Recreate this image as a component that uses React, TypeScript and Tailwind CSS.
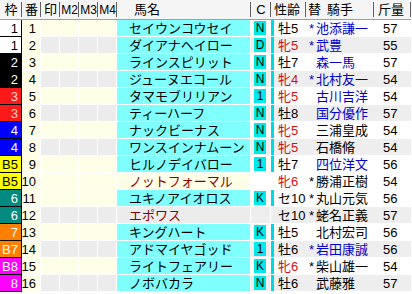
const cols = "grid grid-cols-[22px_19px_19px_19px_19px_19px_134px_20px_35px_68px_37px]";

type Row = {
  waku: string;
  wc: string;
  ban: number;
  name: string;
  c: string;
  sex: string;
  star: boolean;
  jockey: string;
  blue: boolean;
  kin: string;
  out?: boolean;
  shade?: boolean;
};

const wakuColor: Record<string, string> = {
  "1": "bg-white text-black",
  "2": "bg-black text-white",
  "3": "bg-[#ff1a1a] text-[#ffd0d0]",
  "4": "bg-[#0000ff] text-white",
  "5": "bg-[#ffff00] text-black",
  "6": "bg-[#008a80] text-white",
  "7": "bg-[#ff8000] text-white",
  "8": "bg-[#ff00ff] text-white",
};

const rows: Row[] = [
  { waku: "1", wc: "1", ban: 1, name: "セイウンコウセイ", c: "N", sex: "牡5", star: true, jockey: "池添謙一", blue: true, kin: "57" },
  { waku: "1", wc: "1", ban: 2, name: "ダイアナヘイロー", c: "D", sex: "牝5", star: true, jockey: "武豊", blue: true, kin: "55", shade: true },
  { waku: "2", wc: "2", ban: 3, name: "ラインスピリット", c: "N", sex: "牡7", star: false, jockey: "森一馬", blue: true, kin: "57" },
  { waku: "2", wc: "2", ban: 4, name: "ジューヌエコール", c: "N", sex: "牝4", star: true, jockey: "北村友一", blue: true, kin: "54", shade: true },
  { waku: "3", wc: "3", ban: 5, name: "タマモブリリアン", c: "1", sex: "牝5", star: false, jockey: "古川吉洋", blue: true, kin: "54" },
  { waku: "3", wc: "3", ban: 6, name: "ティーハーフ", c: "N", sex: "牡8", star: false, jockey: "国分優作", blue: true, kin: "57", shade: true },
  { waku: "4", wc: "4", ban: 7, name: "ナックビーナス", c: "N", sex: "牝5", star: false, jockey: "三浦皇成", blue: false, kin: "54" },
  { waku: "4", wc: "4", ban: 8, name: "ワンスインナムーン", c: "N", sex: "牝5", star: false, jockey: "石橋脩", blue: false, kin: "54", shade: true },
  { waku: "B5", wc: "5", ban: 9, name: "ヒルノデイバロー", c: "1", sex: "牡7", star: false, jockey: "四位洋文", blue: true, kin: "56" },
  { waku: "B5", wc: "5", ban: 10, name: "ノットフォーマル", c: "", sex: "牝6", star: true, jockey: "勝浦正樹", blue: false, kin: "54", out: true },
  { waku: "6", wc: "6", ban: 11, name: "ユキノアイオロス", c: "K", sex: "セ10", star: true, jockey: "丸山元気", blue: false, kin: "56" },
  { waku: "6", wc: "6", ban: 12, name: "エポワス", c: "", sex: "セ10", star: true, jockey: "蛯名正義", blue: false, kin: "57", out: true, shade: true },
  { waku: "7", wc: "7", ban: 13, name: "キングハート", c: "K", sex: "牡5", star: false, jockey: "北村宏司", blue: false, kin: "56" },
  { waku: "B7", wc: "7", ban: 14, name: "アドマイヤゴッド", c: "1", sex: "牡6", star: true, jockey: "岩田康誠", blue: true, kin: "56", shade: true },
  { waku: "B8", wc: "8", ban: 15, name: "ライトフェアリー", c: "K", sex: "牝6", star: true, jockey: "柴山雄一", blue: false, kin: "54" },
  { waku: "8", wc: "8", ban: 16, name: "ノボバカラ", c: "N", sex: "牡6", star: false, jockey: "武藤雅", blue: false, kin: "57", shade: true },
];

function Head({ children, className = "" }: { children?: React.ReactNode; className?: string }) {
  return (
    <div className={"relative flex items-center h-[20px] border-b border-[#a0a0a0] " + className}>
      {children}
      <span className="absolute right-0 top-[2px] bottom-[2px] w-px bg-[#606060]" />
    </div>
  );
}

function DataRow({ r }: { r: Row }) {
  const light = r.shade ? "bg-[#ececec]" : "bg-[#ffffe8]";
  const side = r.shade ? "bg-[#eeeeee]" : "bg-white";
  return (
    <div className={cols + " h-[17px]"}>
      <div className={"flex items-center justify-end pr-[3px] border-r border-b border-black " + wakuColor[r.wc]}>
        {r.waku}
      </div>
      <div className="flex items-center justify-end pr-[4px] bg-[#ffffe8] border-r border-b border-white">{r.ban}</div>
      <div className={light + " border-r border-b border-white"} />
      <div className={light + " border-r border-b border-white"} />
      <div className={light + " border-r border-b border-white"} />
      <div className={light + " border-r border-b border-white"} />
      <div
        className={
          "flex items-center pl-[12px] border-r border-b border-white whitespace-nowrap " +
          (r.out ? light + " text-[#8b0000]" : "bg-[#80ffff] text-black")
        }
      >
        {r.name}
      </div>
      <div className={"flex items-center pl-[3px] border-r border-b border-white " + side}>
        {r.c && (
          <span className="flex items-center justify-center w-[12px] h-[14px] bg-[#00e8e8] text-black text-[12px]">
            {r.c}
          </span>
        )}
      </div>
      <div className={"flex items-center border-b border-white " + side}>
        <span className={"w-[3px] h-full " + (r.out ? "" : "bg-[#00d8e8]")} />
        <span className={"pl-[4px] " + (r.sex.startsWith("牝") ? "text-[#d01010]" : "text-black")}>{r.sex}</span>
      </div>
      <div className={"flex items-center border-b border-white whitespace-nowrap " + side + (r.blue ? " text-[#0000c8]" : " text-black")}>
        <span className="w-[10px] pl-[3px]">{r.star ? "*" : ""}</span>
        {r.jockey}
      </div>
      <div className={"flex items-center pl-[9px] border-b border-white " + side}>{r.kin}</div>
    </div>
  );
}

export default function App() {
  return (
    <div
      className="w-[412px] h-[294px] overflow-hidden bg-white text-[13px] leading-none text-black"
      style={{ fontFamily: '"Liberation Sans", "Noto Sans CJK JP", sans-serif' }}
    >
      <div className={cols + " bg-[#f5f5f5]"}>
        <Head className="justify-center">枠</Head>
        <Head className="justify-center">番</Head>
        <Head className="justify-center">印</Head>
        <Head className="justify-center text-[12px]">M2</Head>
        <Head className="justify-center text-[12px]">M3</Head>
        <Head className="justify-center text-[12px]">M4</Head>
        <Head className="pl-[17px]">馬名</Head>
        <Head className="justify-center">C</Head>
        <Head className="pl-[3px]">性齢</Head>
        <Head className="pl-[2px]">
          替<span className="ml-[6px]">騎手</span>
        </Head>
        <Head className="pl-[4px]">斤量</Head>
      </div>
      {rows.map((r) => (
        <DataRow key={r.ban} r={r} />
      ))}
    </div>
  );
}
